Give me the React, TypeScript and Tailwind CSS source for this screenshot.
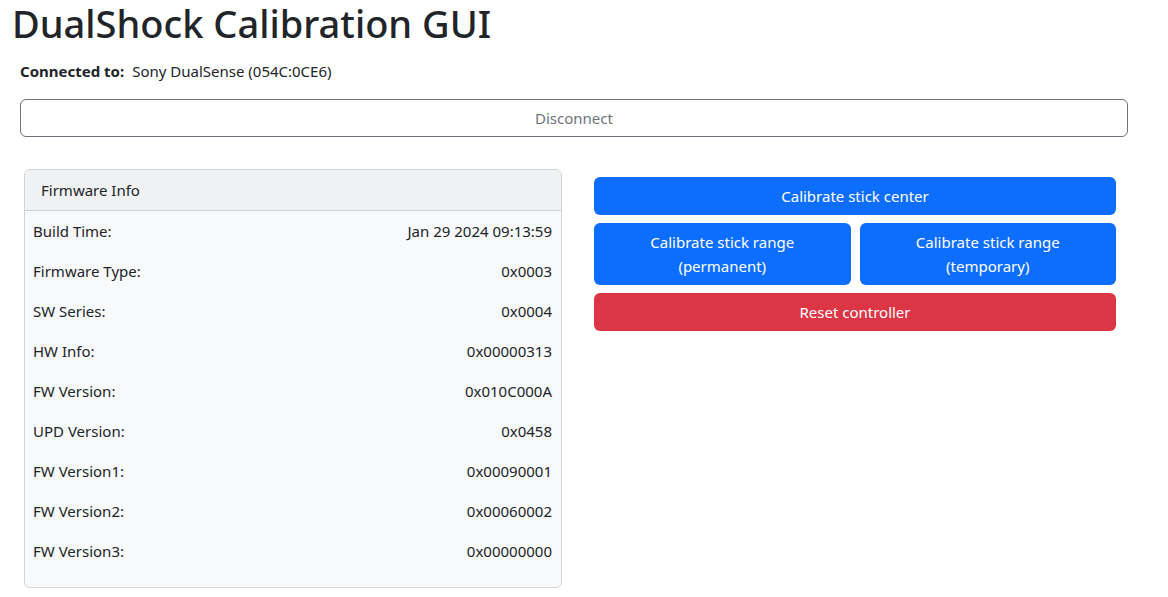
import React from "react";

const rows: [string, string][] = [
  ["Build Time:", "Jan 29 2024 09:13:59"],
  ["Firmware Type:", "0x0003"],
  ["SW Series:", "0x0004"],
  ["HW Info:", "0x00000313"],
  ["FW Version:", "0x010C000A"],
  ["UPD Version:", "0x0458"],
  ["FW Version1:", "0x00090001"],
  ["FW Version2:", "0x00060002"],
  ["FW Version3:", "0x00000000"],
];

export default function App() {
  return (
    <div
      className="min-h-[597px] bg-white text-[#212529] text-[16px] leading-6"
      style={{ fontFamily: '"Noto Sans", "Open Sans", sans-serif' }}
    >
      <h1 className="pl-[12px] text-[38px] leading-[47px] font-medium m-0">DualShock Calibration GUI</h1>
      <div className="pl-[20px] mt-[12px] flex gap-[8px] text-[15px]">
        <span className="font-bold">Connected to:</span>
        <span>Sony DualSense (054C:0CE6)</span>
      </div>
      <div className="pl-[20px] pr-[40px] mt-[16px]">
        <button className="w-full h-[38px] rounded-[6px] border border-[#6c757d] text-[#6c757d] text-[15px] bg-white">
          Disconnect
        </button>
      </div>
      <div className="flex pl-[24px] pr-[52px] mt-[32px] gap-[32px]">
        <div className="w-[538px] rounded-[6px] border border-[#d3d4d5] bg-[#f8f9fa] overflow-hidden">
          <div className="h-[41px] flex items-center px-[16px] bg-[#f0f1f2] border-b border-[#d0d1d2] text-[15px]">
            Firmware Info
          </div>
          <div className="pb-[16px] text-[15px]">
            {rows.map(([k, v]) => (
              <div key={k} className="h-[40px] flex items-center justify-between pl-[8px] pr-[9px]">
                <span>{k}</span>
                <span>{v}</span>
              </div>
            ))}
          </div>
        </div>
        <div className="flex-1 pt-[8px] flex flex-col gap-[8px] text-[15px] text-white">
          <button className="h-[38px] rounded-[6px] bg-[#0d6efd]">Calibrate stick center</button>
          <div className="flex gap-[9px]">
            <button className="flex-1 h-[62px] rounded-[6px] bg-[#0d6efd] leading-6">
              Calibrate stick range
              <br />
              (permanent)
            </button>
            <button className="flex-1 h-[62px] rounded-[6px] bg-[#0d6efd] leading-6">
              Calibrate stick range
              <br />
              (temporary)
            </button>
          </div>
          <button className="h-[38px] rounded-[6px] bg-[#dc3545]">Reset controller</button>
        </div>
      </div>
    </div>
  );
}
